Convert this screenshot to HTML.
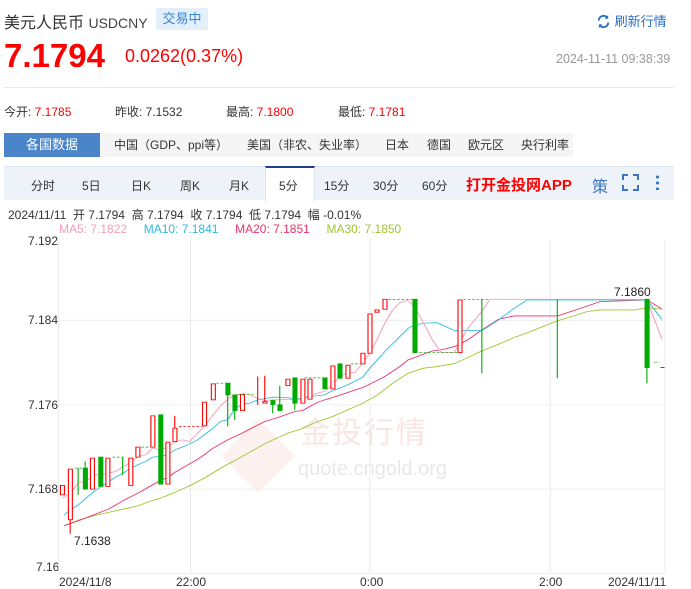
<!DOCTYPE html><html><head><meta charset="utf-8"><style>
body{margin:0;width:691px;height:588px;overflow:hidden;background:#fff;font-family:"Liberation Sans","Noto Sans CJK SC",sans-serif;position:relative}
.a{position:absolute;white-space:nowrap}
</style></head><body>
<div class="a" style="left:4px;top:9px;font-size:16px;color:#333">美元人民币 <span style="font-size:14px;color:#444">USDCNY</span></div>
<div class="a" style="left:156px;top:8px;width:52px;height:22px;background:#e3f0fb;color:#3a86d4;font-size:13px;line-height:22px;text-align:center">交易中</div>
<div class="a" style="left:596px;top:11px;font-size:13px;color:#2c6fc0"><svg width="15" height="15" viewBox="0 0 16 16" style="vertical-align:-3px"><path d="M3 7a5 5 0 0 1 9-3M13 9a5 5 0 0 1-9 3" fill="none" stroke="#2c6fc0" stroke-width="2"/><path d="M13 1v4h-4zM3 15v-4h4z" fill="#2c6fc0"/></svg> 刷新行情</div>
<div class="a" style="left:4px;top:37px;font-size:33px;font-weight:bold;color:#f00">7.1794</div>
<div class="a" style="left:125px;top:46px;font-size:18px;color:#f00">0.0262(0.37%)</div>
<div class="a" style="left:556px;top:52px;font-size:12.5px;color:#999">2024-11-11 09:38:39</div>
<div class="a" style="left:4px;top:87px;width:670px;height:1px;background:#e8e8e8"></div>
<div class="a" style="left:4px;top:103px;font-size:12px;color:#333">今开: <span style="color:#f00">7.1785</span></div>
<div class="a" style="left:115px;top:103px;font-size:12px;color:#333">昨收: 7.1532</div>
<div class="a" style="left:226px;top:103px;font-size:12px;color:#333">最高: <span style="color:#f00">7.1800</span></div>
<div class="a" style="left:338px;top:103px;font-size:12px;color:#333">最低: <span style="color:#f00">7.1781</span></div>
<div class="a" style="left:100px;top:133px;width:473px;height:24px;background:#f5f5f5"></div>
<div class="a" style="left:4px;top:133px;width:96px;height:24px;background:#4a84c9;color:#fff;font-size:13px;line-height:24px;text-align:center">各国数据</div>
<div class="a" style="top:133px;left:0;font-size:12px;color:#333;line-height:24px"><span class="a" style="left:114px">中国（GDP、ppi等）</span><span class="a" style="left:247px">美国（非农、失业率）</span><span class="a" style="left:385px">日本</span><span class="a" style="left:427px">德国</span><span class="a" style="left:468px">欧元区</span><span class="a" style="left:521px">央行利率</span></div>
<div class="a" style="left:4px;top:166px;width:670px;height:33px;background:#eef3fa;border-top:1px solid #dde6f2"></div>
<div class="a" style="left:265px;top:166px;width:48px;height:34px;background:#fff;border-top:2px solid #1d3f8e;border-left:1px solid #dde6f2;border-right:1px solid #dde6f2"></div>
<div class="a" style="top:177px;left:0;font-size:12px;color:#333"><span class="a" style="left:31px">分时</span><span class="a" style="left:82px">5日</span><span class="a" style="left:131px">日K</span><span class="a" style="left:180px">周K</span><span class="a" style="left:229px">月K</span><span class="a" style="left:279px">5分</span><span class="a" style="left:324px">15分</span><span class="a" style="left:373px">30分</span><span class="a" style="left:422px">60分</span></div>
<div class="a" style="left:466px;top:174px;font-size:15px;font-weight:bold;color:#f00">打开金投网APP</div>
<div class="a" style="left:592px;top:173px;font-size:16px;color:#3a76c4">策</div>
<svg class="a" style="left:622px;top:174px" width="17" height="17"><path d="M1 6V1h5M11 1h5v5M16 11v5h-5M6 16H1v-5" fill="none" stroke="#3a76c4" stroke-width="2"/></svg>
<div class="a" style="left:656px;top:174px;width:3px;height:16px;background:radial-gradient(circle,#3a76c4 1.5px,transparent 1.6px) 0 0/3px 6px"></div>
<div class="a" style="left:8px;top:206px;font-size:12px;color:#333">2024/11/11 &nbsp;开 7.1794 &nbsp;高 7.1794 &nbsp;收 7.1794 &nbsp;低 7.1794 &nbsp;幅 -0.01%</div>
<div class="a" style="left:59px;top:222px;font-size:12px"><span style="color:#f4a0b8">MA5: 7.1822</span> &nbsp; &nbsp; <span style="color:#2fb8d8">MA10: 7.1841</span> &nbsp; &nbsp; <span style="color:#e8336a">MA20: 7.1851</span> &nbsp; &nbsp; <span style="color:#9fc52b">MA30: 7.1850</span></div>
<div class="a" style="left:28px;top:234px;font-size:12px;color:#333">7.192</div>
<div class="a" style="left:28px;top:313px;font-size:12px;color:#333">7.184</div>
<div class="a" style="left:28px;top:398px;font-size:12px;color:#333">7.176</div>
<div class="a" style="left:28px;top:482px;font-size:12px;color:#333">7.168</div>
<div class="a" style="left:36px;top:560px;font-size:12px;color:#333">7.16</div>
<div class="a" style="left:74px;top:534px;font-size:12px;color:#222">7.1638</div>
<div class="a" style="left:614px;top:285px;font-size:12px;color:#222">7.1860</div>
<div class="a" style="left:59px;top:575px;font-size:12px;color:#333">2024/11/8</div>
<div class="a" style="left:176px;top:575px;font-size:12px;color:#333">22:00</div>
<div class="a" style="left:360px;top:575px;font-size:12px;color:#333">0:00</div>
<div class="a" style="left:539px;top:575px;font-size:12px;color:#333">2:00</div>
<div class="a" style="left:608px;top:575px;font-size:12px;color:#333">2024/11/11</div>
<div class="a" style="left:300px;top:408px;font-size:30px;color:rgba(230,150,140,.25);letter-spacing:2px">金投行情</div>
<div class="a" style="left:298px;top:458px;font-size:20px;color:rgba(180,180,180,.3)">quote.cngold.org</div>
<div class="a" style="left:232px;top:430px;width:52px;height:52px;transform:rotate(45deg);background:rgba(240,160,150,.15)"></div>
<svg class="a" style="left:0;top:240px" width="691" height="348" viewBox="0 0 1566 1045" preserveAspectRatio="none">
<g stroke="#e8e8e8" stroke-width="2" fill="none">
<path d="M133 241H1507M133 495H1507M133 748H1507M133 1001H1507M432 0V1001M838 0V1001M1247 0V1001M1507 0V1001M133 0V1001"/></g>
<g fill="none" stroke-width="2.5">
<polyline stroke="#9fc52b" points="145,858 180,840 213,828 246,818 280,808 313,798 346,782 364,775 396,758 430,738 463,715 500,685 549,650 600,612 652,580 686,566 720,545 754,530 788,510 822,490 856,465 890,430 925,400 960,385 990,380 1030,371 1060,353 1092,333 1130,313 1165,293 1200,276 1263,243 1300,228 1330,215 1360,210 1440,210 1466,203 1500,208"/>
<polyline stroke="#e8336a" points="145,858 180,842 213,825 246,808 280,782 313,760 346,735 364,722 380,713 396,698 430,672 446,660 463,645 483,625 516,600 549,580 566,568 600,545 630,533 668,515 686,512 702,500 720,487 736,480 754,473 770,466 788,458 822,443 838,433 872,410 906,380 925,360 940,353 980,333 1000,330 1030,320 1060,300 1092,270 1130,238 1165,228 1263,228 1300,212 1360,185 1466,180 1500,207"/>
<polyline stroke="#2fc0df" points="145,825 160,810 178,795 195,775 213,755 230,740 262,712 280,700 296,685 313,675 330,665 346,652 364,650 380,645 396,630 413,622 430,612 446,602 463,585 483,565 500,545 516,540 532,508 549,493 566,490 584,480 618,472 652,473 668,478 686,475 702,470 736,465 754,452 770,445 788,435 822,412 838,385 872,335 906,290 925,265 940,255 960,250 990,248 1030,272 1092,272 1130,240 1165,205 1195,180 1466,180 1500,238"/>
<polyline stroke="#f4a0b8" points="141,775 160,760 178,728 195,725 213,705 230,705 246,700 262,695 280,680 296,668 313,650 330,645 346,625 364,630 380,622 396,608 413,600 430,605 446,582 463,560 483,525 500,498 516,478 532,466 549,462 566,464 584,476 600,482 618,480 634,480 652,478 668,480 686,480 702,465 720,460 736,454 754,435 770,408 788,400 804,398 822,370 838,340 854,300 872,250 890,210 906,188 925,182 940,200 960,250 980,300 1000,338 1030,338 1045,300 1063,260 1092,215 1110,178 1466,178 1500,298"/>
</g>
<g stroke="#f00" stroke-width="2.5" fill="#fff">
<rect x="137" y="737" width="9" height="28"/><rect x="155" y="688" width="9" height="152"/><path d="M159 840V882"/>
<rect x="205" y="655" width="9" height="93"/><rect x="240" y="655" width="9" height="85"/><rect x="292" y="655" width="9" height="82"/><rect x="308" y="622" width="9" height="30"/><rect x="342" y="528" width="9" height="94"/><rect x="376" y="607" width="9" height="126"/><rect x="392" y="565" width="9" height="40"/><path d="M396 565V528"/><rect x="459" y="487" width="9" height="71"/><rect x="479" y="432" width="9" height="48"/><rect x="545" y="465" width="9" height="47"/><path d="M584 410V495M600 408V490"/><rect x="596" y="485" width="9" height="5"/><rect x="648" y="418" width="9" height="19"/><rect x="682" y="418" width="9" height="72"/><rect x="698" y="418" width="9" height="60"/><rect x="750" y="378" width="9" height="69"/><rect x="784" y="376" width="9" height="39"/><rect x="818" y="340" width="9" height="32"/><rect x="834" y="222" width="9" height="118"/><rect x="850" y="210" width="9" height="7"/><rect x="868" y="178" width="9" height="30"/><rect x="1038" y="180" width="9" height="158"/>
</g>
<g fill="#0a0" stroke="#0a0" stroke-width="2.5">
<path d="M177 685V765M193 665V685M278 652V705M516 465V560M532 512V540M618 494V520M634 495V438M668 490V510M1092 178V400M1263 178V415M1466 383V430" fill="none"/>
<rect x="189" y="685" width="9" height="63"/><rect x="224" y="652" width="9" height="88"/><rect x="360" y="525" width="9" height="208"/><rect x="512" y="430" width="9" height="35"/><rect x="528" y="465" width="9" height="47"/><rect x="614" y="482" width="9" height="12"/><rect x="630" y="495" width="9" height="17"/><rect x="664" y="414" width="9" height="76"/><rect x="732" y="414" width="9" height="33"/><rect x="766" y="372" width="9" height="43"/><rect x="936" y="178" width="9" height="160"/><rect x="1462" y="178" width="9" height="205"/>
</g>
<g stroke-width="2" stroke-dasharray="6 4" fill="none">
<path stroke="#0a0" d="M170 685H188M255 652H280M320 622H345M490 430H512M540 463H575M690 414H735M795 372H820M950 338H1036M1050 178H1110M1483 367H1495"/>
<path stroke="#f00" d="M405 560H458M880 178H935"/>
<path stroke="#000" d="M1497 383H1506" stroke-dasharray="none"/>
</g>
</svg>
</body></html>
